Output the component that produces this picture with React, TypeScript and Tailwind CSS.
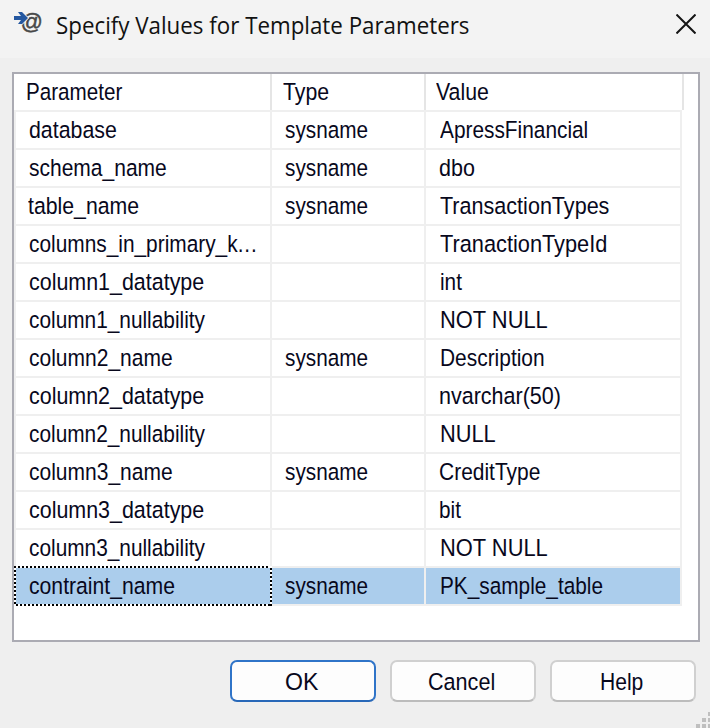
import { useLayoutEffect, useRef, useState } from "react";

type Label = { text: string; width: number; tail?: string };

// Condenses a label horizontally so that it takes exactly the given width.
function Fit({ text, width, tail, className = "" }: Label & { className?: string }) {
  const ref = useRef<HTMLSpanElement>(null);
  const [scale, setScale] = useState(1);
  useLayoutEffect(() => {
    if (ref.current) setScale(width / ref.current.offsetWidth);
  }, [width, text]);
  return (
    <span className={`block whitespace-nowrap ${className}`} style={{ width }}>
      <span ref={ref} className="inline-block origin-left" style={{ transform: `scaleX(${scale})` }}>
        {text}
        {tail && <span className="tracking-[1px]">{tail}</span>}
      </span>
    </span>
  );
}

const rows: [Label, boolean, Label][] = [
  [{ text: "database", width: 88 }, true, { text: "ApressFinancial", width: 148 }],
  [{ text: "schema_name", width: 138 }, true, { text: "dbo", width: 36 }],
  [{ text: "table_name", width: 111 }, true, { text: "TransactionTypes", width: 169 }],
  [{ text: "columns_in_primary_k", tail: "...", width: 229 }, false, { text: "TranactionTypeId", width: 167 }],
  [{ text: "column1_datatype", width: 175 }, false, { text: "int", width: 22 }],
  [{ text: "column1_nullability", width: 176 }, false, { text: "NOT NULL", width: 108 }],
  [{ text: "column2_name", width: 144 }, true, { text: "Description", width: 105 }],
  [{ text: "column2_datatype", width: 175 }, false, { text: "nvarchar(50)", width: 122 }],
  [{ text: "column2_nullability", width: 176 }, false, { text: "NULL", width: 56 }],
  [{ text: "column3_name", width: 144 }, true, { text: "CreditType", width: 101 }],
  [{ text: "column3_datatype", width: 175 }, false, { text: "bit", width: 22 }],
  [{ text: "column3_nullability", width: 176 }, false, { text: "NOT NULL", width: 108 }],
  [{ text: "contraint_name", width: 146 }, true, { text: "PK_sample_table", width: 163 }],
];

function FocusRect() {
  return (
    <div className="absolute -top-0.5 -left-0.5 h-10 w-[258px]">
      <div className="absolute inset-x-0 top-0 h-0.5 bg-[repeating-linear-gradient(90deg,#000_0_2px,#fff_2px_4px)]" />
      <div className="absolute inset-x-0 bottom-0 h-0.5 bg-[repeating-linear-gradient(90deg,#fff_0_2px,#000_2px_4px)]" />
      <div className="absolute inset-y-0 left-0 w-0.5 bg-[repeating-linear-gradient(180deg,#000_0_2px,#fff_2px_4px)]" />
      <div className="absolute inset-y-0 right-0 w-0.5 bg-[repeating-linear-gradient(180deg,#fff_0_2px,#000_2px_4px)]" />
    </div>
  );
}

function DialogButton({ text, width, primary = false }: Label & { primary?: boolean }) {
  return (
    <button
      className={`flex h-[42px] w-[146px] items-center justify-center rounded-[7px] border-2 bg-[#fdfdfd] pr-1 pt-px ${
        primary ? "border-[#2f74c8] border-b-[#2868b8]" : "border-[#d0d0d0] border-b-[#bcbcbc]"
      }`}
    >
      <Fit text={text} width={width} />
    </button>
  );
}

export default function App() {
  return (
    <div className="relative flex h-[728px] w-[710px] flex-col overflow-hidden bg-[#efefef] font-['Liberation_Sans',Arial,sans-serif] text-[24.5px] leading-9 text-[#08081c]">
      <header className="flex h-[58px] shrink-0 justify-between bg-[#f3f3f3] pl-3.5">
        <div className="flex">
          <svg className="mt-3 h-6 w-[30px] overflow-visible" viewBox="0 0 30 24">
            <text x="6.5" y="17.3" fontSize="22" fill="#484848" stroke="#484848" strokeWidth="0.5" fontFamily="Liberation Sans">
              @
            </text>
            <path d="M0 4h7L4 0h4l6 6-6 6H4l3-4H0z" fill="#2457a0" stroke="#f3f3f3" strokeWidth="1.6" paintOrder="stroke" />
          </svg>
          <Fit
            text="Specify Values for Template Parameters"
            width={413}
            className="ml-3 mt-[7px] font-['Open_Sans','Noto_Sans',sans-serif] text-2xl leading-9 text-[#111]"
          />
        </div>
        <svg className="mr-3.5 mt-3.5 size-5" viewBox="0 0 20 20" stroke="#151515" strokeWidth="2">
          <path d="M.5.5l19 19M19.5.5l-19 19" />
        </svg>
      </header>

      <main className="ml-3 mt-3.5 h-[570px] w-[688px] shrink-0 border-2 border-[#ababb3] bg-white">
        <div className="flex h-9 w-[670px]">
          <div className="w-[258px] border-r-2 border-[#e5e5e5] pl-3">
            <Fit text="Parameter" width={96} />
          </div>
          <div className="w-[154px] border-r-2 border-[#e5e5e5] pl-[11px]">
            <Fit text="Type" width={46} />
          </div>
          <div className="grow border-r-2 border-[#e5e5e5] pl-2.5">
            <Fit text="Value" width={53} />
          </div>
        </div>
        <div className="w-[668px] border-l-2 border-t-2 border-[#efefef]">
          {rows.map(([name, typed, value], i) => {
            const selected = i === rows.length - 1;
            return (
              <div key={i} className={`relative flex h-[38px] ${selected ? "bg-[#abcdec]" : "bg-white"}`}>
                <div className={`w-64 border-r-2 border-b-2 border-[#efefef] ${i === 2 ? "pl-3" : "pl-[13px]"}`}>
                  <Fit {...name} />
                </div>
                <div className="w-[154px] border-r-2 border-b-2 border-[#efefef] pl-[13px]">
                  {typed && <Fit text="sysname" width={83} />}
                </div>
                <div
                  className={`w-64 border-r-2 border-b-2 border-[#efefef] ${
                    i === 1 || i === 7 || i === 9 || i === 10 ? "pl-[13px]" : "pl-3.5"
                  }`}
                >
                  <Fit {...value} />
                </div>
                {selected && <FocusRect />}
              </div>
            );
          })}
        </div>
      </main>

      <footer className="ml-[230px] mt-[18px] flex gap-3.5">
        <DialogButton text="OK" width={33} primary />
        <DialogButton text="Cancel" width={67} />
        <DialogButton text="Help" width={43} />
      </footer>

      <svg className="absolute bottom-0 right-0 h-4 w-3.5" viewBox="0 0 14 16" fill="#bfbfbf">
        <path d="M12 0h4v4h-4zM6 6h4v4H6zM12 6h4v4h-4zM0 12h4v4H0zM6 12h4v4H6zM12 12h4v4h-4z" />
      </svg>
    </div>
  );
}
